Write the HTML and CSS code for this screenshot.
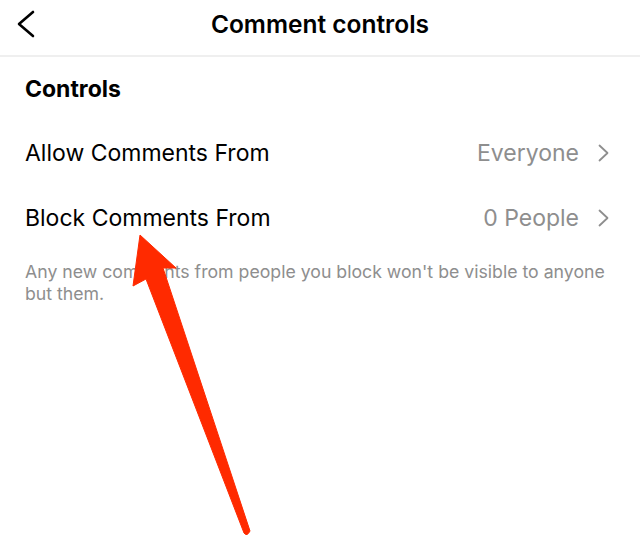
FILE: index.html
```html
<!DOCTYPE html>
<html lang="en">
<head>
  <meta charset="UTF-8">
  <meta name="viewport" content="width=device-width, initial-scale=1.0">
  <title>Comment controls</title>
  <link rel="stylesheet" href="styles.css">
</head>
<body>
  <div class="screen">
    <div class="topbar">
      <button class="back-btn" aria-label="Back">
        <svg width="22" height="28" viewBox="0 0 22 28">
          <path d="M18 2 L4 14 L18 26" fill="none" stroke="#000" stroke-width="2.6" stroke-linecap="round" stroke-linejoin="round"/>
        </svg>
      </button>
      <div class="title">Comment controls</div>
      <div></div>
    </div>

    <div class="section">
      <div class="section-title">Controls</div>

      <div class="row first-row">
        <span class="row-label">Allow Comments From</span>
        <span class="row-value">Everyone</span>
        <svg class="chevron" width="13" height="18" viewBox="0 0 13 18">
          <path d="M2.5 1.5 L10.5 9 L2.5 16.5" fill="none" stroke="#8e8e8e" stroke-width="1.8" stroke-linecap="round" stroke-linejoin="round"/>
        </svg>
      </div>

      <div class="row">
        <span class="row-label">Block Comments From</span>
        <span class="row-value">0 People</span>
        <svg class="chevron" width="13" height="18" viewBox="0 0 13 18">
          <path d="M2.5 1.5 L10.5 9 L2.5 16.5" fill="none" stroke="#8e8e8e" stroke-width="1.8" stroke-linecap="round" stroke-linejoin="round"/>
        </svg>
      </div>

      <p class="note">Any new comments from people you block won't be visible to anyone but them.</p>
    </div>

    <!-- annotation arrow drawn over the screenshot -->
    <svg class="arrow" width="640" height="543" viewBox="0 0 640 543">
      <path d="M140 235 L176 268 L163 268 L250 531 Q247 537 244 533 L146 279 L133 286 Z" fill="#ff2a00" stroke="#ff2a00" stroke-width="1" stroke-linejoin="round"/>
    </svg>
  </div>
</body>
</html>
```

FILE: styles.css
```css
body {
  margin: 0;
  background-color: #fff;
  font-family: Inter, "Noto Sans", Arial, sans-serif;
  color: #000;
}

.screen {
  position: relative;
  width: 640px;
  height: 543px;
  overflow: hidden;
}

.topbar {
  display: grid;
  grid-template-columns: 60px 1fr 60px;
  align-items: center;
  height: 55px;
  border-bottom: 2px solid #efefef;
}

.back-btn {
  background: none;
  border: none;
  padding: 0 0 0 15px;
  display: flex;
  align-items: center;
  height: 55px;
  margin-top: -8px;
  cursor: pointer;
}

.title {
  text-align: center;
  font-size: 24.5px;
  font-weight: 600;
  margin-top: -8px;
}

.section {
  padding: 0 30px 0 25px;
}

.section-title {
  font-size: 23px;
  font-weight: 700;
  padding-top: 19px;
  line-height: 26px;
}

.row {
  display: flex;
  align-items: center;
  height: 65px;
}

.first-row {
  margin-top: 18px;
}

.row-label {
  flex: 1;
  font-size: 23px;
}

.row-value {
  font-size: 23px;
  color: #8e8e8e;
  margin-right: 18px;
}

.note {
  margin: 11px 0 0;
  font-size: 17.7px;
  line-height: 22px;
  color: #8e8e8e;
}

.arrow {
  position: absolute;
  left: 0;
  top: 0;
  pointer-events: none;
}
```
